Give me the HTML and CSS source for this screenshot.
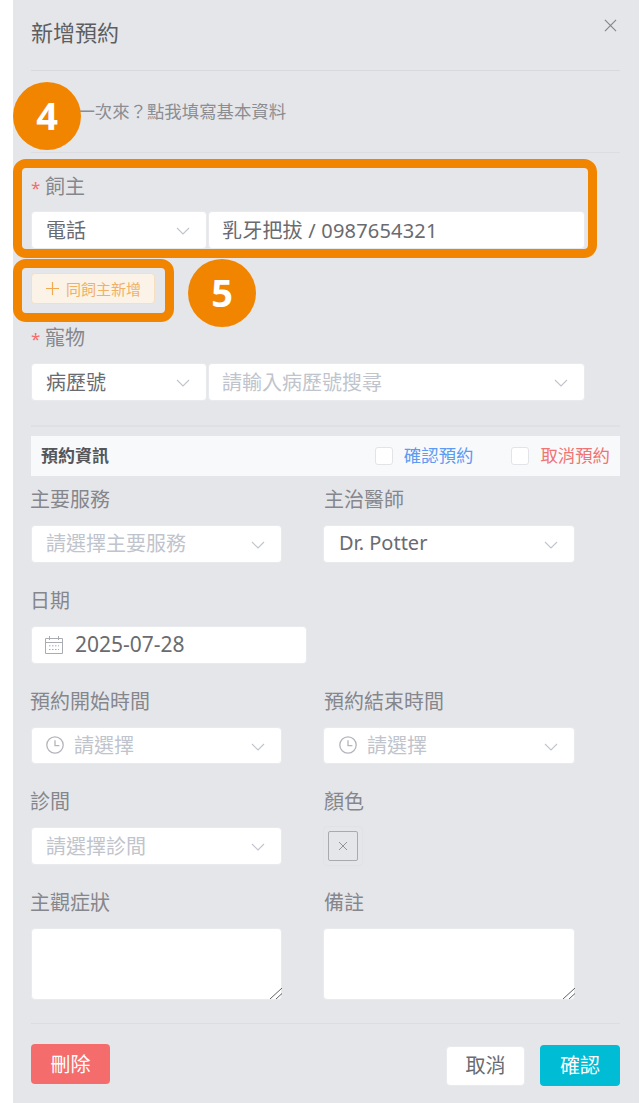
FILE: index.html
```html
<!DOCTYPE html>
<html lang="zh-Hant">

<head>
  <meta charset="UTF-8" />
  <meta name="viewport" content="width=device-width, initial-scale=1.0" />
  <title>新增預約</title>
  <link rel="stylesheet" href="styles.css">
</head>

<body>
  <div class="dialog">
    <div class="dialog_header">
      <span class="dialog_title">新增預約</span>
      <svg class="close_icon" viewBox="0 0 14 14"><path d="M1 1l12 12M13 1L1 13" /></svg>
    </div>

    <div class="notice">第一次來？點我填寫基本資料</div>

    <div class="label owner_label"><span class="star">*</span>飼主</div>
    <div class="combo">
      <div class="select combo_type">電話<svg class="arrow" viewBox="0 0 14 8"><path d="M1 1l6 6 6-6" /></svg></div>
      <div class="select combo_value">乳牙把拔 / 0987654321</div>
    </div>

    <button class="add_btn"><svg class="plus_icon" viewBox="0 0 13 13"><path d="M6.5 0v13M0 6.5h13" /></svg>同飼主新增</button>

    <div class="label pet_label"><span class="star">*</span>寵物</div>
    <div class="combo">
      <div class="select combo_type">病歷號<svg class="arrow" viewBox="0 0 14 8"><path d="M1 1l6 6 6-6" /></svg></div>
      <div class="select combo_value placeholder">請輸入病歷號搜尋<svg class="arrow" viewBox="0 0 14 8"><path d="M1 1l6 6 6-6" /></svg></div>
    </div>

    <div class="divider"></div>

    <div class="info_bar">
      <span class="info_title">預約資訊</span>
      <div class="info_checks">
        <label class="check check_blue"><span class="check_box"></span><span class="check_text">確認預約</span></label>
        <label class="check check_red"><span class="check_box"></span><span class="check_text">取消預約</span></label>
      </div>
    </div>

    <div class="fields">
      <div class="field">
        <div class="label">主要服務</div>
        <div class="select placeholder">請選擇主要服務<svg class="arrow" viewBox="0 0 14 8"><path d="M1 1l6 6 6-6" /></svg></div>
      </div>
      <div class="field field_right">
        <div class="label">主治醫師</div>
        <div class="select">Dr. Potter<svg class="arrow" viewBox="0 0 14 8"><path d="M1 1l6 6 6-6" /></svg></div>
      </div>

      <div class="field field_date">
        <div class="label">日期</div>
        <div class="select date_input">
          <svg class="calendar_icon" viewBox="0 0 18 18">
            <path d="M.5 2.5h17v15H.5zM.5 6.5h17M4.5 0v4M13.5 0v4" />
            <path class="calendar_dots" d="M4 9.8h10M4 13.5h10" />
          </svg>
          2025-07-28
        </div>
      </div>

      <div class="field">
        <div class="label">預約開始時間</div>
        <div class="select placeholder time_input">
          <svg class="clock_icon" viewBox="0 0 18 18"><circle cx="9" cy="9" r="8.2" /><path d="M9 4.2V9.6h4.4" /></svg>
          請選擇<svg class="arrow" viewBox="0 0 14 8"><path d="M1 1l6 6 6-6" /></svg>
        </div>
      </div>
      <div class="field field_right">
        <div class="label">預約結束時間</div>
        <div class="select placeholder time_input">
          <svg class="clock_icon" viewBox="0 0 18 18"><circle cx="9" cy="9" r="8.2" /><path d="M9 4.2V9.6h4.4" /></svg>
          請選擇<svg class="arrow" viewBox="0 0 14 8"><path d="M1 1l6 6 6-6" /></svg>
        </div>
      </div>

      <div class="field">
        <div class="label">診間</div>
        <div class="select placeholder">請選擇診間<svg class="arrow" viewBox="0 0 14 8"><path d="M1 1l6 6 6-6" /></svg></div>
      </div>
      <div class="field field_right">
        <div class="label">顏色</div>
        <div class="swatch">
          <div class="swatch_inner">
            <svg class="swatch_icon" viewBox="0 0 10 10"><path d="M1 1l8 8M9 1L1 9" /></svg>
          </div>
        </div>
      </div>

      <div class="field">
        <div class="label">主觀症狀</div>
        <div class="textarea_wrap">
          <textarea class="textarea"></textarea>
          <svg class="resize_icon" viewBox="0 0 12 11"><path d="M0 11L12 0M6 11l6-5.500" /></svg>
        </div>
      </div>
      <div class="field field_right">
        <div class="label">備註</div>
        <div class="textarea_wrap">
          <textarea class="textarea"></textarea>
          <svg class="resize_icon" viewBox="0 0 12 11"><path d="M0 11L12 0M6 11l6-5.500" /></svg>
        </div>
      </div>
    </div>

    <div class="footer">
      <button class="btn btn_delete">刪除</button>
      <div class="footer_right">
        <button class="btn btn_cancel">取消</button>
        <button class="btn btn_confirm">確認</button>
      </div>
    </div>
  </div>

  <div class="outline outline_owner"></div>
  <div class="outline outline_add"></div>
  <div class="step step_4">4</div>
  <div class="step step_5">5</div>
</body>

</html>
```

FILE: styles.css
```css
* {
  box-sizing: border-box;
}

body {
  margin: 0;
  padding: 0;
  position: relative;
  background-color: white;
  font-family: "Noto Sans", "Noto Sans CJK TC", sans-serif;
}

.dialog {
  width: 626px;
  height: 1103px;
  margin-left: 13px;
  padding: 0 19px 0 18px;
  background-color: #e5e6ea;
  overflow: hidden;
}

.dialog_header {
  display: flex;
  justify-content: space-between;
  height: 71px;
  padding-top: 17px;
  border-bottom: 1px solid #d8d9de;
}

.dialog_title {
  font-size: 22px;
  line-height: 30px;
  color: #5c5e62;
}

.close_icon {
  width: 13px;
  height: 13px;
  margin: 2px 3px 0 0;
  fill: none;
  stroke: #85878c;
  stroke-width: 1.3;
}

.notice {
  display: flex;
  align-items: center;
  height: 82px;
  padding: 0 0 2px 29px;
  font-size: 17.4px;
  color: #8b8d92;
  border-bottom: 1px solid #dcdde2;
}

.label {
  height: 24px;
  font-size: 20px;
  line-height: 24px;
  color: #85878c;
}

.owner_label {
  margin-top: 22px;
}

.pet_label {
  margin-top: 22px;
}

.star {
  display: inline-block;
  width: 14px;
  font-size: 17px;
  color: #f56c6c;
}

.combo {
  display: flex;
  gap: 1px;
  width: 554px;
  margin-top: 12px;
}

.pet_label + .combo {
  margin-top: 13px;
}

.select {
  display: flex;
  align-items: center;
  position: relative;
  height: 37.75px;
  padding: 0 0 2px 14px;
  font-size: 20px;
  color: #696b70;
  background-color: white;
  border: 1px solid #e9eaee;
  border-radius: 4px;
}

.placeholder {
  color: #c0c4cc;
}

.combo .select {
  height: 38px;
}

.combo_type {
  flex: none;
  width: 176px;
}

.combo_value {
  flex: 1;
  padding-left: 13px;
  letter-spacing: 0.2px;
}

.combo_value.placeholder {
  letter-spacing: 0;
}

.arrow {
  position: absolute;
  right: 16px;
  top: 15px;
  width: 14px;
  height: 8px;
  fill: none;
  stroke: #c0c4cc;
  stroke-width: 1.1;
}

.add_btn {
  display: flex;
  align-items: center;
  gap: 7px;
  width: 124px;
  height: 31px;
  margin-top: 24px;
  padding: 0 0 0 14px;
  font-family: inherit;
  font-size: 15px;
  color: #f1b063;
  background-color: #fbf3e8;
  border: 1px solid #f5dfc0;
  border-radius: 4px;
}

.plus_icon {
  width: 13px;
  height: 13px;
  fill: none;
  stroke: #f1a850;
  stroke-width: 1.2;
}

.divider {
  height: 2px;
  margin-top: 24px;
  background-color: #dfe0e5;
}

.info_bar {
  display: flex;
  justify-content: space-between;
  align-items: center;
  height: 40px;
  margin-top: 9px;
  padding: 0 10px;
  background-color: #f8f9fb;
}

.info_title {
  padding-bottom: 3px;
  font-size: 17px;
  font-weight: bold;
  color: #54565a;
}

.info_checks {
  display: flex;
  gap: 38px;
}

.check {
  display: flex;
  align-items: center;
  gap: 11px;
  font-size: 17.4px;
}

.check_text {
  padding-bottom: 3px;
}

.check_blue {
  color: #5b9bf2;
}

.check_red {
  color: #ef7474;
}

.check_box {
  width: 18px;
  height: 18px;
  background-color: white;
  border: 1px solid #e3e4e8;
  border-radius: 3px;
}

.fields {
  display: grid;
  grid-template-columns: 251px 251px;
  column-gap: 42px;
  row-gap: 26px;
  margin-top: 12px;
}

.field .label {
  margin: 0 0 13px -1px;
}

.field_right .label {
  margin-left: 0;
}

.field_right .select {
  margin-left: -1px;
  padding-left: 15px;
}

.field_date {
  grid-column: 1 / 3;
}

.date_input {
  width: 276px;
  font-size: 21px;
}

.calendar_icon {
  flex: none;
  width: 18px;
  height: 18px;
  margin: 2px 12px 0 -1px;
  fill: none;
  stroke: #a9acb3;
  stroke-width: 1;
}

.calendar_dots {
  stroke-dasharray: 1.5 1.5;
}

.clock_icon {
  flex: none;
  width: 18px;
  height: 18px;
  margin: 2px 10px 0 0;
  fill: none;
  stroke: #b3b6bd;
  stroke-width: 1.3;
}

.swatch {
  display: flex;
  align-items: center;
  justify-content: center;
  width: 40px;
  height: 40px;
  margin: -1px 0 -1.25px -1px;
  border: 1px solid #e1e2e6;
  border-radius: 4px;
}

.swatch_inner {
  display: flex;
  align-items: center;
  justify-content: center;
  width: 30px;
  height: 30px;
  border: 1px solid #a8aaaf;
  border-radius: 2px;
}

.swatch_icon {
  width: 10px;
  height: 10px;
  fill: none;
  stroke: #909399;
  stroke-width: 1;
}

.textarea_wrap {
  position: relative;
  height: 72px;
}

.field_right .textarea_wrap {
  margin-left: -1px;
}

.textarea {
  display: block;
  width: 100%;
  height: 72px;
  margin: 0;
  background-color: white;
  border: 1px solid #e9eaee;
  border-radius: 4px;
  outline: none;
  resize: none;
}

.resize_icon {
  position: absolute;
  right: 0;
  bottom: 1px;
  width: 12px;
  height: 11px;
  fill: none;
  stroke: #5f6165;
  stroke-width: 1;
}

.footer {
  display: flex;
  justify-content: space-between;
  align-items: flex-start;
  height: 65px;
  margin-top: 23px;
  padding-top: 20px;
  border-top: 1px solid #dcdde2;
}

.footer_right {
  display: flex;
  align-items: center;
  gap: 15px;
  margin-top: 1px;
}

.btn {
  height: 40px;
  padding: 0 0 2px;
  font-family: inherit;
  font-size: 20px;
  border-radius: 4px;
  border: 1px solid transparent;
}

.btn_delete {
  width: 79px;
  color: white;
  background-color: #f56c6c;
}

.btn_cancel {
  width: 79px;
  color: #696b70;
  background-color: white;
  border-color: #e9eaee;
}

.btn_confirm {
  width: 80px;
  height: 41px;
  color: white;
  background-color: #00bcd4;
}

.outline {
  position: absolute;
  left: 13px;
  border: 9px solid #f28500;
  border-radius: 13px;
}

.outline_owner {
  top: 158.5px;
  width: 584px;
  height: 99px;
}

.outline_add {
  top: 259px;
  width: 161px;
  height: 63px;
}

.step {
  position: absolute;
  display: flex;
  align-items: center;
  justify-content: center;
  width: 68px;
  height: 68px;
  padding-bottom: 2px;
  font-size: 38px;
  font-weight: bold;
  font-family: "Open Sans", sans-serif;
  color: white;
  background-color: #f28500;
  border-radius: 50%;
}

.step_4 {
  left: 13px;
  top: 82px;
}

.step_5 {
  left: 188px;
  top: 259px;
}
```
